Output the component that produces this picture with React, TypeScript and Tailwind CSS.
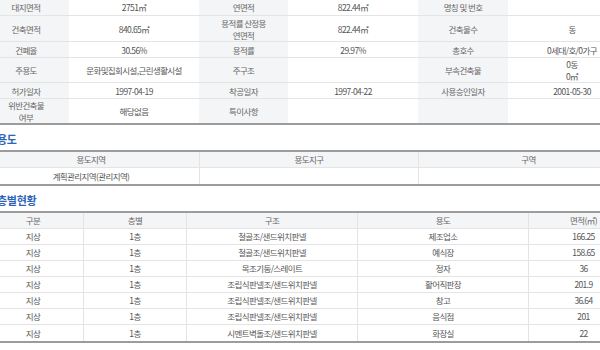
const font = { fontFamily: '"Noto Sans CJK KR", "Noto Sans", sans-serif' };

const topCols = ["w-[86px]", "w-[130px]", "w-[89px]", "w-[130px]", "w-[90px]", "w-[128px]"];

const topRows: { h: string; cells: string[][] }[] = [
  { h: "h-[17px]", cells: [["대지면적"], ["2751㎡"], ["연면적"], ["822.44㎡"], ["명칭 및 번호"], [""]] },
  { h: "h-[26px]", cells: [["건축면적"], ["840.65㎡"], ["용적률 산정용", "연면적"], ["822.44㎡"], ["건축물수"], ["동"]] },
  { h: "h-[16px]", cells: [["건폐율"], ["30.56%"], ["용적률"], ["29.97%"], ["총호수"], ["0세대/호/0가구"]] },
  { h: "h-[25px]", cells: [["주용도"], ["문화및집회시설,근린생활시설"], ["주구조"], [""], ["부속건축물"], ["0동", "0㎡"]] },
  { h: "h-[16px]", cells: [["허가일자"], ["1997-04-19"], ["착공일자"], ["1997-04-22"], ["사용승인일자"], ["2001-05-30"]] },
];

const lastRow: string[][] = [["위반건축물", "여부"], ["해당없음"], ["특이사항"], [""], [""], [""]];

const floorCols = ["w-[100px]", "w-[103px]", "w-[171px]", "w-[171px]", "w-[110px]"];
const floorHead = ["구분", "층별", "구조", "용도", "면적(㎡)"];
const floors = [
  ["지상", "1층", "철골조/샌드위치판넬", "제조업소", "166.25"],
  ["지상", "1층", "철골조/샌드위치판넬", "예식장", "158.65"],
  ["지상", "1층", "목조기둥/스레이트", "정자", "36"],
  ["지상", "1층", "조립식판넬조/샌드위치판넬", "활어직판장", "201.9"],
  ["지상", "1층", "조립식판넬조/샌드위치판넬", "창고", "36.64"],
  ["지상", "1층", "조립식판넬조/샌드위치판넬", "음식점", "201"],
  ["지상", "1층", "시멘트벽돌조/샌드위치판넬", "화장실", "22"],
];

function TopCell({ lines, idx }: { lines: string[]; idx: number }) {
  const label = idx % 2 === 0;
  return (
    <div
      className={`${topCols[idx]} h-full flex flex-col items-center justify-center text-center leading-[12px] whitespace-nowrap ${
        label ? "bg-[#f4f5f7] text-[#666]" : "bg-white text-[#555]"
      }`}
    >
      {lines.map((l, i) => (
        <span key={i}>{l}</span>
      ))}
    </div>
  );
}

function Heading({ children }: { children: string }) {
  return (
    <div className="h-[25px] pt-[9px]">
      <h3 className="pl-[14px] text-[11px] font-bold text-[#2f65b8] leading-none tracking-[-0.3px]">
        {children}
      </h3>
    </div>
  );
}

export default function App() {
  return (
    <div className="w-[600px] h-[350px] overflow-hidden bg-white" style={font}>
      <div className="-ml-[17px] w-[660px] text-[8.5px] tracking-[-0.6px]">
        {/* 건축물 개요 */}
        <div className="-mt-[1px]">
          {topRows.map((r, ri) => (
            <div key={ri} className={`flex ${r.h} border-b border-[#e4e4e4]`}>
              {r.cells.map((c, ci) => (
                <TopCell key={ci} lines={c} idx={ci} />
              ))}
            </div>
          ))}
          <div className="flex h-[26px] border-b-2 border-[#9c9c9c]">
            {lastRow.map((c, ci) => (
              <TopCell key={ci} lines={c} idx={ci} />
            ))}
          </div>
        </div>

        {/* 용도 */}
        <Heading>용도</Heading>
        <div className="border-t-2 border-b-2 border-[#9c9c9c]">
          <div className="flex h-[16px] bg-[#f4f5f7] text-[#666] border-b border-[#e4e4e4]">
            <div className="w-[216px] flex items-center justify-center">용도지역</div>
            <div className="w-[219px] flex items-center justify-center border-l border-[#e4e4e4]">용도지구</div>
            <div className="w-[220px] flex items-center justify-center border-l border-[#e4e4e4]">구역</div>
          </div>
          <div className="flex h-[16px] text-[#555]">
            <div className="w-[216px] flex items-center justify-center">계획관리지역(관리지역)</div>
            <div className="w-[219px] border-l border-[#e4e4e4]" />
            <div className="w-[220px] border-l border-[#e4e4e4]" />
          </div>
        </div>

        {/* 층별현황 */}
        <Heading>층별현황</Heading>
        <div className="border-t-2 border-b-2 border-[#9c9c9c]">
          <div className="flex h-[16px] bg-[#f4f5f7] text-[#666] border-b border-[#e4e4e4]">
            {floorHead.map((h, i) => (
              <div
                key={i}
                className={`${floorCols[i]} flex items-center justify-center ${i > 0 ? "border-l border-[#e4e4e4]" : ""}`}
              >
                {h}
              </div>
            ))}
          </div>
          {floors.map((row, ri) => (
            <div
              key={ri}
              className={`flex h-[16px] text-[#555] ${ri < floors.length - 1 ? "border-b border-[#e4e4e4]" : ""}`}
            >
              {row.map((c, ci) => (
                <div
                  key={ci}
                  className={`${floorCols[ci]} flex items-center justify-center ${ci > 0 ? "border-l border-[#e4e4e4]" : ""}`}
                >
                  {c}
                </div>
              ))}
            </div>
          ))}
        </div>
      </div>
    </div>
  );
}
